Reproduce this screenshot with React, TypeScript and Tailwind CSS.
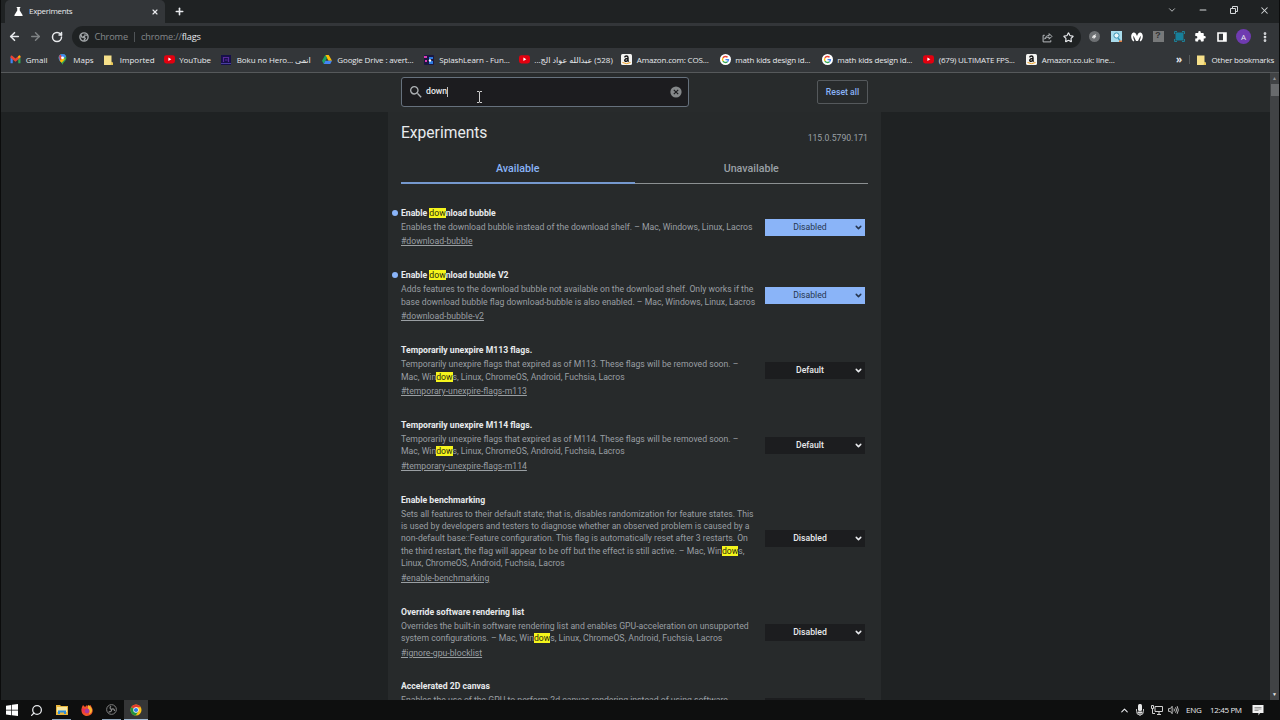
import React from "react";
import {
  ArrowLeft, ArrowRight, RotateCw, X, Plus, Minus, ChevronDown, ChevronUp, Search, Star, MoreVertical,
} from "lucide-react";

const ChromeMono = ({ className }: { className?: string }) => (
  <svg viewBox="0 0 20 20" className={className} fill="none" stroke="#a4a8ab" strokeWidth="2.8">
    <circle cx="10" cy="10" r="8.200" />
    <circle cx="10" cy="10" r="3.200" fill="#a4a8ab" stroke="#1f2223" strokeWidth="1" />
    <path d="M10 6.200h7.200M7 11.800L3.400 5.600M13 11.800l-3.500 6" />
  </svg>
);

const ChromeLogo = () => (
  <svg viewBox="0 0 24 24" className="size-[12px]">
    <circle cx="12" cy="12" r="11" fill="#fbc116" />
    <path d="M12 12L2.5 6.5A11 11 0 0 1 21.5 6.5H12z" fill="#e33b2e" />
    <path d="M12 12L2.5 6.5A11 11 0 0 0 11.5 23L16.7 14.7z" fill="#229342" />
    <circle cx="12" cy="12" r="5.4" fill="#fff" />
    <circle cx="12" cy="12" r="4.2" fill="#2e7be8" />
  </svg>
);

const Gmail = () => (
  <svg viewBox="0 0 20 16" className="h-[9px] w-[11px]">
    <path d="M1 15V3l4 3v9z" fill="#4285f4" />
    <path d="M15 15V6l4-3v12z" fill="#34a853" />
    <path d="M1 5V2.5C1 .8 2.8.5 4 1.4L10 6l6-4.6c1.2-.9 3-.6 3 1.1V5l-9 7z" fill="#ea4335" />
    <path d="M15 6.2V2l1-.7c1.2-.8 3-.4 3 1.2v1z" fill="#fbbc04" />
  </svg>
);
const Maps = () => (
  <svg viewBox="0 0 16 20" className="h-[11px] w-[9px]">
    <path d="M8 20C7 15 1 13 1 7a7 7 0 0 1 14 0c0 6-6 8-7 13z" fill="#34a853" />
    <path d="M1 7a7 7 0 0 1 7-7v7l-5 5.500C1.600 11 1 9 1 7z" fill="#4285f4" />
    <path d="M2 3.500L4 1.200 8 5v4l-4.500 4z" fill="#ea4335" />
    <path d="M3 12.500L10 5l2 5-5.500 6z" fill="#fbbc04" />
    <path d="M8 0a7 7 0 0 1 6.500 4L10 8 5.500 5z" fill="#4285f4" />
    <circle cx="8" cy="7" r="2.600" fill="#fff" />
  </svg>
);
const Folder = () => (
  <svg viewBox="0 0 9 10" className="h-[10px] w-[9px]">
    <path d="M0 .5h7.500v6.500L9 8v2H0z" fill="#f6e08a" />
    <path d="M7.500 6.500L9 8v2H6.500z" fill="#e7c655" />
  </svg>
);
const YouTube = () => (
  <svg viewBox="0 0 12 9" className="h-[8.5px] w-[11px]">
    <rect width="12" height="9" rx="2.500" fill="#e3000f" />
    <path d="M4.800 2.600v3.800L8 4.500z" fill="#fff" />
  </svg>
);
const Boku = () => (
  <svg viewBox="0 0 10 10" className="size-[10px]">
    <rect width="10" height="10" fill="#17104a" />
    <path d="M2.500 7V2.500h5V7M4 5h2.500" stroke="#5a2a9a" strokeWidth="1.200" fill="none" />
    <path d="M0 8.500h10" stroke="#4a3da0" />
  </svg>
);
const Drive = () => (
  <svg viewBox="0 0 20 18" className="h-[9px] w-[10px]">
    <path d="M6.500 0h7L20 11.500h-7z" fill="#fbbc04" />
    <path d="M6.500 0L0 11.500 3.500 18 10 6z" fill="#1ea362" />
    <path d="M6.800 11.500H20L16.500 18h-13z" fill="#4285f4" />
  </svg>
);
const Splash = () => (
  <svg viewBox="0 0 10 10" className="size-[10px]">
    <rect width="10" height="10" rx="1" fill="#1b1740" />
    <path d="M0 1h3v2H0zM1 5h2v2H1z" fill="#d63bb5" />
    <path d="M5 2h4v2H6v2h3v3H5z" fill="#2c7be0" />
    <circle cx="6" cy="5.500" r="1.200" fill="#fff" />
  </svg>
);
const Amazon = () => (
  <svg viewBox="0 0 11 11" className="size-[11px]">
    <rect width="11" height="11" rx="1.500" fill="#f4f4f2" />
    <path d="M3.600 3.300C4 1.600 7 1.500 7 3.500v3.300l.7.800M7 4.500c-4-.2-4 3-1.800 2.800C6.300 7.200 7 6.300 7 5.500" fill="none" stroke="#111" strokeWidth="1.400" />
    <path d="M1.500 8.500q4 2.300 8 0" fill="none" stroke="#f0a020" strokeWidth="1" />
  </svg>
);
const Google = () => (
  <svg viewBox="0 0 24 24" className="size-[11px]" fill="none" strokeWidth="3">
    <circle cx="12" cy="12" r="12" fill="#fff" />
    <path d="M16.500 7.300A6.500 6.500 0 0 0 6.400 8.700" stroke="#ea4335" />
    <path d="M6.400 8.700a6.500 6.500 0 0 0 0 6.600" stroke="#fbbc05" />
    <path d="M6.400 15.300a6.500 6.500 0 0 0 9.800 1.700" stroke="#34a853" />
    <path d="M16.200 17a6.500 6.500 0 0 0 2.200-4.800H12" stroke="#4285f4" />
  </svg>
);

type Bookmark = { icon: React.ReactNode; label: string; box: string; rtl?: boolean };
const bookmarks: Bookmark[] = [
  { icon: <Gmail />, label: "Gmail", box: "w-[47.5px]" },
  { icon: <Maps />, label: "Maps", box: "w-[46.5px]" },
  { icon: <Folder />, label: "Imported", box: "w-[59.5px]" },
  { icon: <YouTube />, label: "YouTube", box: "w-[57.5px] tracking-[-0.2px]" },
  { icon: <Boku />, label: "Boku no Hero... انمى", box: "w-[100.5px] tracking-[-0.1px]" },
  { icon: <Drive />, label: "Google Drive : avert...", box: "w-[102px] tracking-[-0.15px]" },
  { icon: <Splash />, label: "SplashLearn - Fun...", box: "w-[95px] tracking-[-0.12px]" },
  { icon: <YouTube />, label: "(528) عبدالله عواد الج...", box: "w-[102.5px]", rtl: true },
  { icon: <Amazon />, label: "Amazon.com: COS...", box: "w-[98.5px] tracking-[-0.16px]" },
  { icon: <Google />, label: "math kids design id...", box: "w-[102px] tracking-[-0.16px]" },
  { icon: <Google />, label: "math kids design id...", box: "w-[101.5px] tracking-[-0.16px]" },
  { icon: <YouTube />, label: "(679) ULTIMATE FPS...", box: "w-[103px] tracking-[-0.2px]" },
  { icon: <Amazon />, label: "Amazon.co.uk: line...", box: "w-[100px] tracking-[-0.16px]" },
];

type Flag = { title: string; lines: string[]; link: string; value: string; changed?: boolean };
const flags: Flag[] = [
  { title: "Enable [dow]nload bubble", lines: ["Enables the download bubble instead of the download shelf. – Mac, Windows, Linux, Lacros"], link: "#download-bubble", value: "Disabled", changed: true },
  { title: "Enable [dow]nload bubble V2", lines: ["Adds features to the download bubble not available on the download shelf. Only works if the", "base download bubble flag download-bubble is also enabled. – Mac, Windows, Linux, Lacros"], link: "#download-bubble-v2", value: "Disabled", changed: true },
  { title: "Temporarily unexpire M113 flags.", lines: ["Temporarily unexpire flags that expired as of M113. These flags will be removed soon. –", "Mac, Win[dow]s, Linux, ChromeOS, Android, Fuchsia, Lacros"], link: "#temporary-unexpire-flags-m113", value: "Default" },
  { title: "Temporarily unexpire M114 flags.", lines: ["Temporarily unexpire flags that expired as of M114. These flags will be removed soon. –", "Mac, Win[dow]s, Linux, ChromeOS, Android, Fuchsia, Lacros"], link: "#temporary-unexpire-flags-m114", value: "Default" },
  { title: "Enable benchmarking", lines: ["Sets all features to their default state; that is, disables randomization for feature states. This", "is used by developers and testers to diagnose whether an observed problem is caused by a", "non-default base::Feature configuration. This flag is automatically reset after 3 restarts. On", "the third restart, the flag will appear to be off but the effect is still active. – Mac, Win[dow]s,", "Linux, ChromeOS, Android, Fuchsia, Lacros"], link: "#enable-benchmarking", value: "Disabled" },
  { title: "Override software rendering list", lines: ["Overrides the built-in software rendering list and enables GPU-acceleration on unsupported", "system configurations. – Mac, Win[dow]s, Linux, ChromeOS, Android, Fuchsia, Lacros"], link: "#ignore-gpu-blocklist", value: "Disabled" },
];

function Marked({ text }: { text: string }) {
  return (
    <>
      {text.split(/(\[[^\]]*\])/).map((part, i) =>
        part.startsWith("[") ? (
          <mark key={i} className="bg-[#f5f51c] font-normal text-[#2a2b10]">{part.slice(1, -1)}</mark>
        ) : (
          <React.Fragment key={i}>{part}</React.Fragment>
        )
      )}
    </>
  );
}

function FlagRow({ flag }: { flag: Flag }) {
  return (
    <div className="relative mb-[20.4px] flex items-center whitespace-nowrap">
      {flag.changed && <span className="absolute -left-[9px] top-[4px] size-[6px] rounded-full bg-[#8ab4f8]" />}
      <div className="w-[364px]">
        <h3 className="text-[8.67px] leading-[14px] font-bold text-[#e8eaed]"><Marked text={flag.title} /></h3>
        <p className="mt-[1px] text-[8.67px] leading-[12.45px] text-[#9a9fa3]">
          {flag.lines.map((l) => (
            <span key={l} className="block"><Marked text={l} /></span>
          ))}
        </p>
        <a className="mt-[2px] block text-[8.67px] leading-[12.450px] text-[#9a9fa3] underline">{flag.link}</a>
      </div>
      <div className={flag.changed
        ? "mt-[1px] flex h-[17px] w-[100px] items-center bg-[#8ab4f8] text-[#26364f]"
        : "mt-[1px] flex h-[17px] w-[100px] items-center bg-[#1c1d1f] font-medium text-[#e8eaed]"}>
        <span className="flex-1 pl-[1px] text-center text-[8.67px]">{flag.value}</span>
        <ChevronDown className="mr-[2px] size-[9px]" strokeWidth={4} />
      </div>
    </div>
  );
}

export default function App() {
  return (
    <div className="h-[720px] w-[1280px] overflow-hidden bg-[#0b0c0c] font-['Open_Sans','Noto_Sans','DejaVu_Sans',sans-serif] text-[#e8eaed]">
      <div className="mx-px flex h-[700px] flex-col bg-[#1f2223]">
        <div className="flex h-[23px] shrink-0 items-stretch">
          <div className="ml-[4px] flex w-[160px] items-center rounded-t-[5px] bg-[#333639] pl-[9px] pr-[6px]">
            <svg viewBox="0 0 10 10" className="size-[9px]"><path d="M3 0h4v1H6.400v3L9.500 9v1H.5V9l3.100-5V1H3z" fill="#fff" /></svg>
            <span className="-mt-px ml-[6px] flex-1 text-[8px] tracking-[-0.32px]">Experiments</span>
            <X className="size-[8px]" strokeWidth={3.500} />
          </div>
          <Plus className="ml-[9px] mt-[6px] size-[11px]" strokeWidth={3.500} />
          <div className="mt-[4px] ml-auto mr-[9px] flex h-[12px] items-center text-[#d5d8da]">
            <ChevronDown className="size-[10px]" strokeWidth={2} />
            <Minus className="ml-[20.5px] size-[10px]" strokeWidth={2.500} />
            <svg viewBox="0 0 8 8" className="ml-[22px] size-[8px]" fill="none" stroke="currentColor"><path d="M.5 2.500h5v5h-5zM2.500 2V.5h5v5H6" /></svg>
            <X className="ml-[21.5px] size-[11px]" strokeWidth={2.200} />
          </div>
        </div>

        <div className="flex h-[25px] shrink-0 items-center bg-[#333639]">
          <ArrowLeft className="ml-[6.500px] mt-[2px] size-[13px]" strokeWidth={3} />
          <ArrowRight className="ml-[8.500px] mt-[2px] size-[13px] text-[#808486]" strokeWidth={2.600} />
          <RotateCw className="ml-[9px] mt-[2px] size-[12px]" strokeWidth={3} />
          <div className="ml-[9px] mt-[3px] flex h-[22px] w-[1009px] items-center rounded-full bg-[#1f2223] pl-[7px] text-[9.200px]">
            <ChromeMono className="size-[10px]" />
            <span className="ml-[5.500px] text-[#85898c] tracking-[-0.150px]">Chrome</span>
            <span className="mx-[6px] h-[10px] w-px bg-[#505457]" />
            <span className="tracking-[-0.160px] text-[#85898c]">chrome://<span className="text-[#e8eaed]">flags</span></span>
            <svg viewBox="0 0 20 20" className="ml-auto size-[11px]" fill="none" stroke="#b9bdc0" strokeWidth="1.800"><path d="M5 6H2v12h14v-3M5 13c1-5 4-6.500 8-6.500V3l5 5-5 5V9.500c-4 0-6 .8-8 3.500z" /></svg>
            <Star className="ml-[10px] mr-[7px] size-[11px]" strokeWidth={2.500} />
          </div>
          <div className="mt-[2px] flex items-center">
            <span className="ml-[8px] flex size-[11px] items-center justify-center rounded-full bg-[#6d7073]">
              <svg viewBox="0 0 8 8" className="size-[7px]"><path d="M1 6l1-3 4-2L5 3l1 1-3 3V5z" fill="#e8e8e8" /></svg>
            </span>
            <svg viewBox="0 0 11 11" className="ml-[11px] size-[11px]"><rect width="11" height="11" fill="#a9dcec" /><circle cx="5.500" cy="4.500" r="2.600" fill="#e8f5f8" stroke="#3b94b4" /><path d="M7 7l2 2.500" stroke="#3b94b4" strokeWidth="1.300" /><path d="M8 9.500h3V11H8z" fill="#e2793a" /></svg>
            <svg viewBox="0 0 12 10" className="ml-[9px] h-[10px] w-[12px]"><path d="M2.500 9.500C-.5 7-.5 2 2 .8 4 0 5.200 2 6 4 6.800 2 8 0 10 .8c2.500 1.200 2.500 6.200-.5 8.700l-.8-1c1-1.600 1.200-3.500.8-4.800L7 9H5L2.500 3.700C2.100 5 2.300 7 3.300 8.500z" fill="#fff" /></svg>
            <span className="ml-[9.500px] flex size-[11px] items-center justify-center bg-[#77797a] font-['Liberation_Mono',monospace] text-[9px] font-bold leading-none text-[#333]">?</span>
            <svg viewBox="0 0 11 11" className="ml-[10.500px] size-[11px]"><path d="M.5 3V.5H3M8 .5h2.500V3M10.500 8v2.500H8M3 10.500H.5V8" fill="none" stroke="#1f7f96" /><path d="M1.500 1.500h8v8h-8z" fill="#17809b" /></svg>
            <svg viewBox="0 0 22 22" className="ml-[10px] size-[11px]"><path d="M19 10h-1.500V6c0-1.100-.9-2-2-2h-4V2.500a2.500 2.500 0 0 0-5 0V4h-4c-1.100 0-2 .9-2 2v3.800H2a2.700 2.700 0 0 1 0 5.400H.5V19c0 1.100.9 2 2 2h3.800v-1.500a2.700 2.700 0 0 1 5.400 0V21h3.800c1.100 0 2-.9 2-2v-4H19a2.500 2.500 0 0 0 0-5z" fill="#fff" /></svg>
            <svg viewBox="0 0 10 10" className="ml-[11px] size-[10px]"><path d="M1 1h8v8H1z" fill="none" stroke="#fff" strokeWidth="1.600" /><path d="M6 1h3v8H6z" fill="#fff" /></svg>
            <span className="ml-[9px] flex size-[15px] items-center justify-center rounded-full bg-[#6f3bb0] text-[8px]">A</span>
            <MoreVertical className="ml-[8px] size-[12px]" strokeWidth={3.500} />
          </div>
        </div>

        <div className="flex h-[25px] shrink-0 items-center border-b border-[#56595b] bg-[#333639] pb-px pl-[9px] text-[8px] whitespace-nowrap">
          {bookmarks.map((b, i) => (
            <div key={i} className={`flex shrink-0 items-center ${b.box}`}>
              <span className="flex w-[15.800px] shrink-0 items-center">{b.icon}</span>
              <span dir={b.rtl ? "rtl" : "ltr"}>{b.label}</span>
            </div>
          ))}
          <span className="ml-auto text-[10px] leading-[8px] font-bold pb-[2px]">»</span>
          <span className="ml-[7px] mr-[7px] h-[9px] w-px bg-[#55595b]" />
          <Folder />
          <span className="ml-[5.500px] mr-[5px] tracking-[-0.22px]">Other bookmarks</span>
        </div>

        <div className="flex min-h-0 flex-1 font-[Roboto,sans-serif]">
          <div className="flex min-w-0 flex-1 flex-col">
            <div className="flex h-[39px] shrink-0 items-start bg-[#282b2c] pl-[399.500px]">
              <div className="relative mt-[3.500px] flex h-[30px] w-[288px] items-center rounded-[3px] border-[1.500px] border-[#66717d] bg-[#1c1c1f] pl-[8px] pr-[5.500px]">
                <svg viewBox="3 3 18 18" className="size-[12px]"><path fill="#aeb2b5" d="M15.500 14h-.79l-.28-.27A6.471 6.471 0 0 0 16 9.500 6.500 6.500 0 1 0 9.500 16c1.610 0 3.090-.59 4.230-1.570l.27.280v.790l5 4.990L20.490 19l-4.990-5zm-6 0C7.010 14 5 11.990 5 9.500S7.010 5 9.500 5 14 7.010 14 9.500 11.990 14 9.500 14z" /></svg>
                <span className="ml-[4.500px] text-[8.670px] font-medium">down</span>
                <span className="h-[10px] w-px bg-[#c0c0c0]" />
                <svg viewBox="0 0 12 12" className="ml-auto size-[12px]"><circle cx="6" cy="6" r="5.600" fill="#85888a" /><path d="M3.800 3.800l4.400 4.400M8.200 3.800L3.800 8.200" stroke="#1c1c1f" strokeWidth="1.200" /></svg>
                <svg viewBox="0 0 7 12" className="absolute left-[74.500px] top-[13.500px] h-[12px] w-[7px]" fill="none" stroke="#cfcfcf"><path d="M1 .5h2l.5.500.5-.5h2M3.500 1v10M1 11.500h2l.5-.5.500.500h2" /></svg>
              </div>
              <div className="mt-[7px] ml-[128.500px] flex h-[24px] w-[51px] items-center justify-center rounded-[2px] border border-[#55595c] text-[8.670px] font-medium text-[#8ab4f8]">Reset all</div>
            </div>
            <div className="flex min-h-0 flex-1 overflow-hidden">
              <div className="ml-[387px] w-[493px] shrink-0 bg-[#272a2b] px-[13px]">
                <div className="flex h-[42px] items-start justify-between">
                  <h1 className="mt-[11px] text-[15.600px] leading-[20px]">Experiments</h1>
                  <span className="mt-[20px] text-[8.670px] leading-[12px] text-[#9aa0a6]">115.0.5790.171</span>
                </div>
                <div className="flex h-[30px] text-center text-[10.670px] font-medium leading-[29px]">
                  <div className="w-[233.500px] border-b-2 border-[#8ab4f8]/80 text-[#8ab4f8]">Available</div>
                  <div className="flex-1 border-b border-[#8c9092] text-[#9aa0a6]">Unavailable</div>
                </div>
                <div className="pt-[22px]">
                  {flags.map((f) => <FlagRow key={f.title} flag={f} />)}
                  <div className="flex whitespace-nowrap">
                    <div className="h-[21px] w-[364px] overflow-hidden text-[8.670px]">
                      <h3 className="leading-[14px] font-bold text-[#e8eaed]">Accelerated 2D canvas</h3>
                      <p className="mt-[1px] leading-[12.450px] text-[#9a9fa3]">Enables the use of the GPU to perform 2d canvas rendering instead of using software</p>
                    </div>
                    <div className="mt-[19px] h-[17px] w-[100px] bg-[#1c1d1f]" />
                  </div>
                </div>
              </div>
            </div>
          </div>
          <div className="flex w-[9px] shrink-0 flex-col items-center bg-[#414345]">
            <span className="flex h-[11px] items-center text-[5px] text-[#909396]">▲</span>
            <span className="h-[12px] w-[8px] bg-[#696b6d]" />
            <span className="mt-auto flex h-[11px] items-center text-[5px]">▼</span>
          </div>
        </div>
      </div>

      <div className="flex h-[20px] items-center bg-[#0e0f0f]">
        <svg viewBox="0 0 12 12" className="ml-[6px] size-[12px]"><path d="M0 1.700l5.300-.8v4.800H0zM6 .8L12 0v5.700H6zM0 6.400h5.300v4.800L0 10.400zM6 6.400h6V12l-6-.8z" fill="#fff" /></svg>
        <Search className="ml-[12px] size-[13px] -scale-x-100" strokeWidth={2.300} />
        <span className="ml-[9px] flex h-full w-[19px] flex-col items-center justify-between pt-[4px]">
          <svg viewBox="0 0 12 11" className="h-[11px] w-[12px]"><path d="M0 1h4l1 1h7v9H0z" fill="#e9b53c" /><path d="M1 3h10v5H1z" fill="#f8e9a0" /><path d="M2 6.500h8V10H8V8.500H4V10H2z" fill="#2e8edb" /></svg>
          <span className="h-[1.500px] w-full bg-[#8fa6bd]" />
        </span>
        <svg viewBox="0 0 12 12" className="ml-[10px] size-[12px]"><path d="M1 3l1-2 2 2 2-2 1 1.500L9.500 1l2 4c1 4-2 7-5.500 7S0 9 .5 5z" fill="#f0522a" /><path d="M7 1c3 1 4.500 4 4 6s-2 3-3 3c1-2 1-4-1-5z" fill="#fbb62f" /><circle cx="6" cy="7" r="2.400" fill="#a63ba0" /><path d="M1 4c2 0 3 1 4 2-2 0-3 2 0 3-3 1-4-2-4-5z" fill="#ef2e4c" /></svg>
        <span className="ml-[9px] flex h-full w-[19px] flex-col items-center justify-between pt-[4px]">
          <svg viewBox="0 0 12 12" className="size-[11px]" fill="none" stroke="#8b8b8b"><circle cx="6" cy="6" r="5.300" /><path d="M6 6c-2-.5-2-2.500-.5-3.500M6 6c.5 2-1.500 3-3 2.300M6 6c1.500-1.500 3.300-.2 3.300 1.500" strokeWidth="1.300" /></svg>
          <span className="h-[1.500px] w-full bg-[#8fa6bd]" />
        </span>
        <span className="ml-[3px] flex h-full w-[24px] flex-col items-center justify-between bg-[#353637] pt-[4px]">
          <ChromeLogo />
          <span className="h-[1.500px] w-full bg-[#a3bcd6]" />
        </span>
        <ChevronUp className="ml-auto size-[11px]" strokeWidth={2.400} />
        <svg viewBox="0 0 8 12" className="ml-[6px] h-[12px] w-[8px]"><rect x="2" width="4" height="7" rx="1.500" fill="#e6e6e6" /><path d="M.5 5v2.500a3 3 0 0 0 7 0V5M4 9.500V12" stroke="#bdbdbd" fill="none" /><path d="M1.500 7.500h5v2h-5z" fill="#ddd" /></svg>
        <svg viewBox="0 0 12 10" className="ml-[7px] h-[10px] w-[12px]" fill="none" stroke="#d0d0d0"><path d="M4 1.500h7.500v5H4zM6 9.500h4M8 7v2.500M.5.500h2v3h-2zM1.500 4v4.500H4" /></svg>
        <svg viewBox="0 0 12 10" className="ml-[5px] h-[10px] w-[11px]" fill="none" stroke="#d0d0d0"><path d="M.5 3.500h2l2-2.500v8l-2-2.500h-2zM6.500 3.500q1 1.500 0 3M8.300 2q2 3 0 6M10 .800q2.500 4.200 0 8.400" /></svg>
        <span className="ml-[7px] w-[16px] text-[8px] tracking-[-0.2px]">ENG</span>
        <span className="ml-[8px] w-[33px] whitespace-nowrap text-[8px] tracking-[-0.35px]">12:45 PM</span>
        <svg viewBox="0 0 12 12" className="ml-[9px] mr-[16px] size-[12px]"><path d="M.5 1h11v8H8L6.500 11.500V9h-6z" fill="#f0f0f0" /><path d="M2.500 3.500h7M2.500 5h7M2.500 6.500h4" stroke="#777" strokeWidth=".7" /></svg>
      </div>
    </div>
  );
}
